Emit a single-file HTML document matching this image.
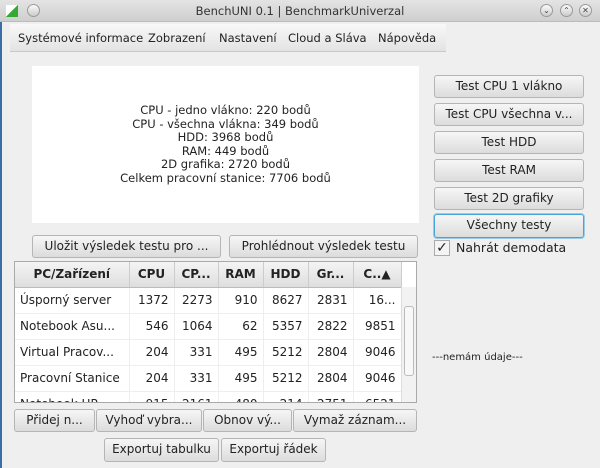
<!DOCTYPE html>
<html><head><meta charset="utf-8"><style>
*{box-sizing:border-box;margin:0;padding:0}
body{width:600px;height:468px;overflow:hidden;background:#efefef;font-family:"DejaVu Sans","Liberation Sans",sans-serif;font-size:12px;color:#222;position:relative}
.a{position:absolute}
.title{left:0;top:0;width:600px;height:22px;background:linear-gradient(#e4e4e4,#cfcfcf);border-bottom:1px solid #bbb;text-align:center;line-height:22px;font-size:11.5px;color:#333}
.circ{width:13px;height:13px;border-radius:50%;border:1px solid #999;background:linear-gradient(#fafafa,#ccc);font-size:8px;line-height:11px;text-align:center;color:#444}
.menu{left:10px;top:24px;width:436px;height:28px;background:linear-gradient(#f8f8f8,#e3e3e3);border-bottom:1px solid #c8c8c8;font-size:11.5px;line-height:28px;white-space:nowrap}
.menu span{position:absolute;top:0}
.btn{background:linear-gradient(#f6f6f6,#dcdcdc);border:1px solid #b5b5b5;border-radius:3px;text-align:center;font-size:12px;line-height:21px;white-space:nowrap;overflow:hidden;color:#222}
table{border-collapse:collapse;font-size:12px}
td{height:26px;padding:0 5px;text-align:right;border-right:1px solid #eee;border-bottom:1px solid #eee;white-space:nowrap}
td:first-child{text-align:left}
th{height:25px;background:linear-gradient(#f4f4f4,#dedede);font-weight:bold;border-right:1px solid #ccc;border-bottom:1px solid #bbb;font-size:12px}
</style></head><body>
<div class="a" style="left:0;top:22px;width:2px;height:446px;background:#3a6ea5"></div>
<div class="a title">BenchUNI 0.1 | BenchmarkUniverzal</div>
<div class="a" style="left:6px;top:5px;width:12px;height:12px;background:linear-gradient(135deg,#fff 50%,#3a3 50%)"></div>
<div class="a circ" style="left:27px;top:4px"></div>
<div class="a circ" style="left:540px;top:4px">⌄</div>
<div class="a circ" style="left:560px;top:4px">⌃</div>
<div class="a circ" style="left:579px;top:4px">✕</div>
<div class="a menu"><span style="left:8px">Systémové informace</span><span style="left:138px">Zobrazení</span><span style="left:209px">Nastavení</span><span style="left:278px">Cloud a Sláva</span><span style="left:368px">Nápověda</span></div>
<div class="a" style="left:32px;top:66px;width:387px;height:157px;background:#fff;text-align:center;font-size:11.5px;line-height:13.5px;padding-top:38px">CPU - jedno vlákno: 220 bodů<br>CPU - všechna vlákna: 349 bodů<br>HDD: 3968 bodů<br>RAM: 449 bodů<br>2D grafika: 2720 bodů<br>Celkem pracovní stanice: 7706 bodů</div>
<div class="a btn" style="left:434px;top:75px;width:150px;height:23px">Test CPU 1 vlákno</div>
<div class="a btn" style="left:434px;top:103px;width:150px;height:23px">Test CPU všechna v...</div>
<div class="a btn" style="left:434px;top:131px;width:150px;height:23px">Test HDD</div>
<div class="a btn" style="left:434px;top:159px;width:150px;height:23px">Test RAM</div>
<div class="a btn" style="left:434px;top:187px;width:150px;height:23px">Test 2D grafiky</div>
<div class="a btn" style="left:434px;top:214px;width:150px;height:24px;border:1px solid #4aa3d8;box-shadow:0 0 0 1px #9ccbe8">Všechny testy</div>
<div class="a" style="left:434px;top:240px;width:16px;height:16px;border:1px solid #aaa;background:#f4f4f4;font-size:14px;line-height:14px;text-align:center">✓</div>
<div class="a" style="left:456px;top:240px;font-size:12.5px">Nahrát demodata</div>
<div class="a btn" style="left:32px;top:235px;width:189px;height:23px;line-height:21px">Uložit výsledek testu pro ...</div>
<div class="a btn" style="left:229px;top:235px;width:189px;height:23px;line-height:21px">Prohlédnout výsledek testu</div>
<div class="a" style="left:14px;top:261px;width:403px;height:142px;border:1px solid #aaa;background:#fff;overflow:hidden">
<table style="width:386px;table-layout:fixed">
<colgroup><col style="width:114px"><col style="width:45px"><col style="width:44px"><col style="width:45px"><col style="width:45px"><col style="width:45px"><col style="width:48px"></colgroup>
<tr><th>PC/Zařízení</th><th>CPU</th><th>CP...</th><th>RAM</th><th>HDD</th><th>Gr...</th><th>C..▲</th></tr>
<tr><td>Úsporný server</td><td>1372</td><td>2273</td><td>910</td><td>8627</td><td>2831</td><td>16...</td></tr>
<tr><td>Notebook Asu...</td><td>546</td><td>1064</td><td>62</td><td>5357</td><td>2822</td><td>9851</td></tr>
<tr><td>Virtual Pracov...</td><td>204</td><td>331</td><td>495</td><td>5212</td><td>2804</td><td>9046</td></tr>
<tr><td>Pracovní Stanice</td><td>204</td><td>331</td><td>495</td><td>5212</td><td>2804</td><td>9046</td></tr>
<tr><td>Notebook HP</td><td>915</td><td>2161</td><td>480</td><td>214</td><td>2751</td><td>6521</td></tr>
</table>
<div class="a" style="left:386px;top:25px;width:16px;height:116px;background:#f2f2f2;border-left:1px solid #ddd"></div>
<div class="a" style="left:389px;top:44px;width:10px;height:70px;border:1px solid #bbb;border-radius:3px;background:#f8f8f8"></div>
</div>
<div class="a btn" style="left:14px;top:409px;width:81px;height:23px">Přidej n...</div>
<div class="a btn" style="left:96px;top:409px;width:106px;height:23px">Vyhoď vybra...</div>
<div class="a btn" style="left:203px;top:409px;width:89px;height:23px">Obnov vý...</div>
<div class="a btn" style="left:293px;top:409px;width:124px;height:23px">Vymaž záznam...</div>
<div class="a btn" style="left:104px;top:438px;width:115px;height:24px">Exportuj tabulku</div>
<div class="a btn" style="left:221px;top:438px;width:105px;height:24px">Exportuj řádek</div>
<div class="a" style="left:432px;top:352px;font-size:10px">---nemám údaje---</div>
</body></html>
